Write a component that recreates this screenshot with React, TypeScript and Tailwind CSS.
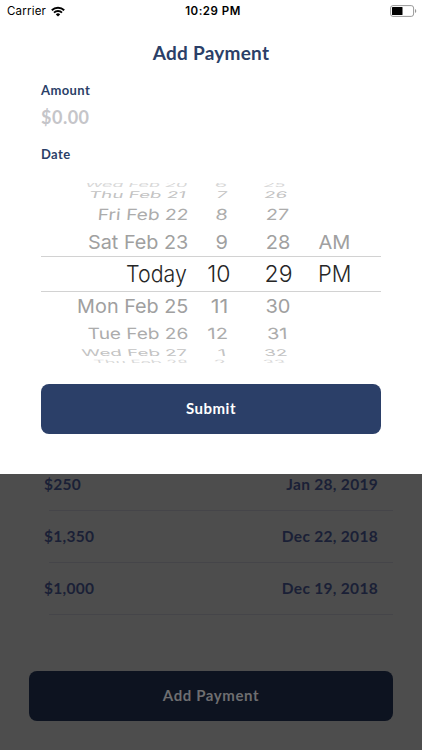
import React from "react";

type Align = "right" | "center" | "left";

interface WheelItem {
  text: string;
  stretch?: number;
  shift?: number;
}

// one entry for each visible row, from the top of the wheel to the bottom
const rowStyles = [
  { row: "h-[5px] text-[#d8d8d8] overflow-hidden", scaleY: 0.36, skew: 8, drop: -1.5 },
  { row: "h-[14px] text-[#c3c3c3]", scaleY: 0.46, skew: 7, drop: -0.5 },
  { row: "h-[25px] text-[#acacac]", scaleY: 0.77, skew: 4, drop: 0 },
  { row: "h-[29px] text-[#a0a0a0]", scaleY: 0.95, skew: 0, drop: 0 },
  { row: "h-[36px] text-[#262626]", scaleY: 1, skew: 0, drop: 0 },
  { row: "h-[29px] text-[#a0a0a0]", scaleY: 0.95, skew: 0, drop: -0.5 },
  { row: "h-[25px] text-[#acacac]", scaleY: 0.77, skew: -2, drop: 0 },
  { row: "h-[13px] text-[#c3c3c3]", scaleY: 0.46, skew: -5, drop: 0 },
  { row: "h-[4px] text-[#d8d8d8] overflow-hidden", scaleY: 0.36, skew: -8, drop: 1.5 },
];

const dates: WheelItem[] = [
  { text: "Wed Feb 20", stretch: 0.9 },
  { text: "Thu Feb 21", stretch: 0.94, shift: -2 },
  { text: "Fri Feb 22", stretch: 0.96 },
  { text: "Sat Feb 23", stretch: 0.99 },
  { text: "Today", stretch: 0.93, shift: -1.5 },
  { text: "Mon Feb 25", stretch: 0.99 },
  { text: "Tue Feb 26", stretch: 0.95, shift: 0.5 },
  { text: "Wed Feb 27", stretch: 0.94, shift: -1 },
  { text: "Thu Feb 28", stretch: 0.88 },
];

const hours: WheelItem[] = [
  { text: "6", shift: -3 },
  { text: "7", stretch: 0.95, shift: -3 },
  { text: "8", shift: -2.5 },
  { text: "9", shift: -2 },
  { text: "10", shift: 0.5 },
  { text: "11", stretch: 1.08, shift: -2 },
  { text: "12", shift: -2.5 },
  { text: "1", shift: -4 },
  { text: "2", shift: -4 },
];

const minutes: WheelItem[] = [
  { text: "25", stretch: 0.9, shift: -3.5 },
  { text: "26", stretch: 0.93, shift: -2.5 },
  { text: "27", stretch: 0.97, shift: -0.5 },
  { text: "28" },
  { text: "29", shift: 0.5 },
  { text: "30" },
  { text: "31", shift: -1 },
  { text: "32", stretch: 0.94, shift: -2.5 },
  { text: "33", stretch: 0.9, shift: -4 },
];

const periods: WheelItem[] = [
  { text: "" },
  { text: "" },
  { text: "" },
  { text: "AM", shift: 1.5 },
  { text: "PM", stretch: 0.95, shift: 1 },
  { text: "" },
  { text: "" },
  { text: "" },
  { text: "" },
];

const payments = [
  { amount: "$250", date: "Jan 28, 2019" },
  { amount: "$1,350", date: "Dec 22, 2018" },
  { amount: "$1,000", date: "Dec 19, 2018" },
];

const WheelColumn = ({ items, align, className }: { items: WheelItem[]; align: Align; className: string }) => {
  const justify = align === "right" ? "justify-end" : align === "center" ? "justify-center" : "justify-start";

  return (
    <div className={`flex flex-col ${className}`}>
      {items.map((item, index) => {
        const { row, scaleY, skew, drop } = rowStyles[index];
        const size = index === 4 ? "text-[23px] font-light" : "text-[20px]";
        return (
          <div key={index} className={`flex shrink-0 items-center ${justify} ${row}`}>
            <span
              className={`block whitespace-nowrap leading-none ${size}`}
              style={{
                transform: `translate(${item.shift ?? 0}px, ${drop}px) scale(${item.stretch ?? 1}, ${scaleY}) skewX(${-skew}deg)`,
                transformOrigin: `${align} center`,
              }}
            >
              {item.text}
            </span>
          </div>
        );
      })}
    </div>
  );
};

const StatusBar = () => (
  <div className="grid h-[22px] grid-cols-3 items-center pl-[7px] pr-[5px] font-['Inter',sans-serif] text-[11.5px] leading-none text-black">
    <div className="flex items-center gap-[5px]">
      <span className="pt-px font-normal tracking-[0.2px]">Carrier</span>
      <svg width="14" height="11" viewBox="0 0 14 11" fill="none" stroke="black" strokeWidth="1.9">
        <path d="M0.8 4.2a8.9 8.9 0 0 1 12.4 0" />
        <path d="M3 6.6a5.7 5.7 0 0 1 8 0" />
        <path d="M7 10.6 4.8 8.4a3.1 3.1 0 0 1 4.4 0z" fill="black" stroke="none" />
      </svg>
    </div>
    <span className="pl-[2px] pt-px text-center font-semibold tracking-[0.5px]">10:29 PM</span>
    <svg className="mb-px justify-self-end" width="27" height="12" viewBox="0 0 27 12">
      <rect x="0.6" y="0.6" width="23" height="10.8" rx="2.4" fill="none" stroke="#999" />
      <rect x="2" y="2" width="10.5" height="8" rx="0.6" fill="black" />
      <path d="M25 4v4a2.2 2.2 0 0 0 0-4z" fill="#999" />
    </svg>
  </div>
);

const DateWheel = () => (
  <div className="relative mx-[41px] mt-[21px] flex h-[181px] overflow-hidden font-['Inter',sans-serif]">
    <WheelColumn items={dates} align="right" className="w-[147px]" />
    <WheelColumn items={hours} align="right" className="w-[42px]" />
    <WheelColumn items={minutes} align="center" className="ml-[29px] w-[38px]" />
    <WheelColumn items={periods} align="left" className="ml-[20px] w-[50px]" />
    <div className="absolute inset-x-0 top-[73px] h-[36px] border-y border-[#d2d2d2]" />
  </div>
);

const App = () => {
  return (
    <div className="flex h-[750px] w-[422px] flex-col overflow-hidden bg-[#4d4d4d] font-['Lato',sans-serif] font-bold">
      <div className="h-[474px] shrink-0 bg-white text-[#2b3f68]">
        <StatusBar />
        <h1 className="mt-[19px] text-center text-[19px] leading-6 tracking-[0.25px]">Add Payment</h1>
        <div className="mt-[17px] px-[41px]">
          <p className="text-[13px] leading-4 tracking-[0.4px]">Amount</p>
          <p className="mt-[7px] text-[18px] leading-6 tracking-[0.5px] text-[#c5c5c9]">$0.00</p>
          <p className="mt-[17px] text-[13px] leading-4 tracking-[0.4px]">Date</p>
        </div>
        <div className="font-normal">
          <DateWheel />
        </div>
        <button className="mx-[41px] mt-[20px] block h-[50px] w-[340px] rounded-[8px] bg-[#2b3f68] pb-[2px] text-[15px] tracking-[0.5px] text-white">
          Submit
        </button>
      </div>

      <div className="pt-px text-[#1a2036]">
        {payments.map((payment, index) => (
          <div key={payment.amount} className="pl-[44px] pr-[29px]">
            <div
              className={`flex items-center justify-between pr-[15px] text-[15.5px] tracking-[0.3px] ${index === 0 ? "h-[35px] pb-[16px]" : "h-[51px]"}`}
            >
              <span>{payment.amount}</span>
              <span>{payment.date}</span>
            </div>
            <div className="ml-[5px] h-px bg-[#454549]" />
          </div>
        ))}
      </div>
      <button className="mx-[29px] mt-[56px] h-[50px] shrink-0 rounded-[8px] bg-[#0d1320] pb-[2px] text-[15px] tracking-[0.6px] text-[#6e6e70]">
        Add Payment
      </button>
    </div>
  );
};

export default App;
